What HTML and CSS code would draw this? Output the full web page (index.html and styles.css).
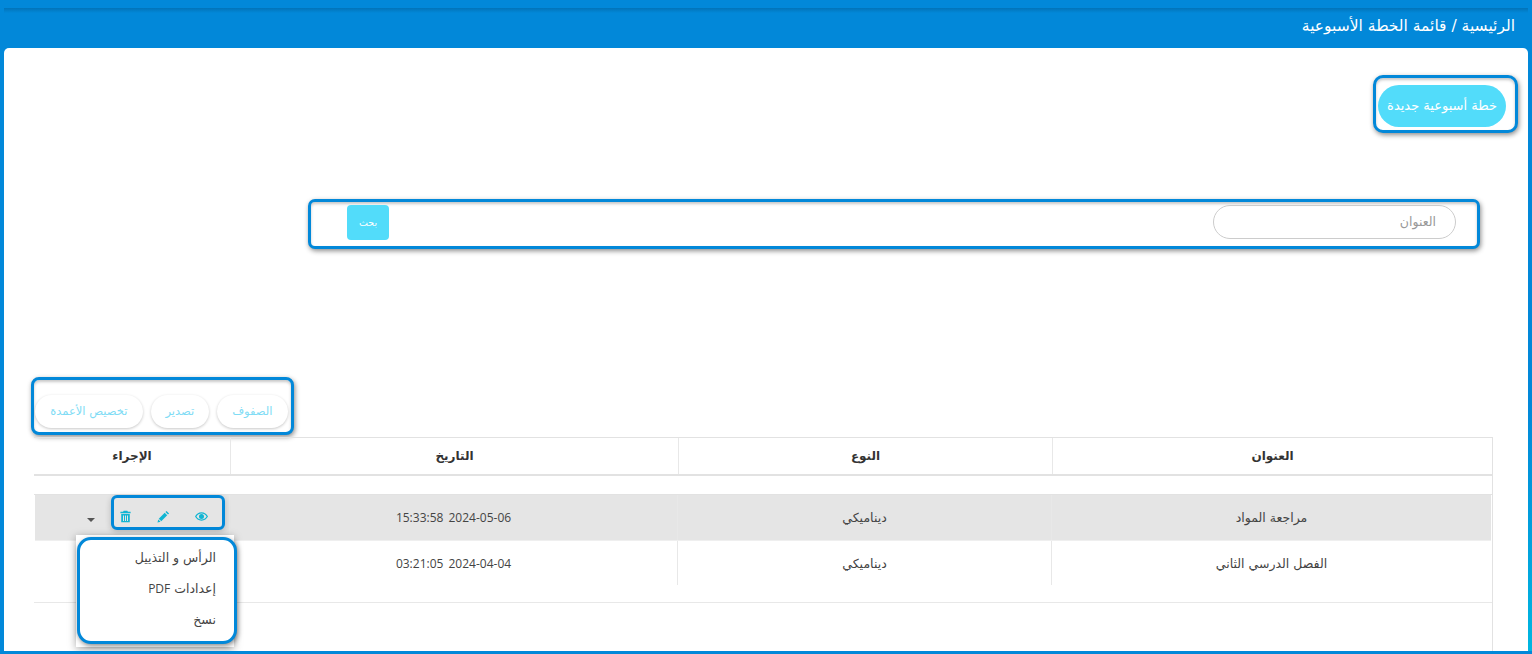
FILE: index.html
```html
<!DOCTYPE html>
<html lang="ar" dir="rtl">
<head>
<meta charset="utf-8">
<title>قائمة الخطة الأسبوعية</title>
<link rel="stylesheet" href="styles.css">
</head>
<body>
<div class="frame">
  <header class="crumb">الرئيسية / قائمة الخطة الأسبوعية</header>
  <main class="card">
    <div class="new-row">
      <div class="mark mark-outer mark-new"><button class="btn-new">خطة أسبوعية جديدة</button></div>
    </div>
    <div class="mark mark-outer mark-search">
      <div class="field">العنوان</div>
      <button class="btn-search">بحث</button>
    </div>
    <div class="mark mark-outer mark-tools">
      <button class="tool">الصفوف</button>
      <button class="tool tool-export">تصدير</button>
      <button class="tool">تخصيص الأعمدة</button>
    </div>
    <div class="table-wrap">
      <div class="row head">
        <div class="cell c1">العنوان</div>
        <div class="cell c2">النوع</div>
        <div class="cell c3">التاريخ</div>
        <div class="cell c4">الإجراء</div>
      </div>
      <div class="spacer"></div>
      <div class="row body sel">
        <div class="cell c1">مراجعة المواد</div>
        <div class="cell c2">ديناميكي</div>
        <div class="cell c3 date">2024-05-06 15:33:58</div>
        <div class="cell c4 actions">
          <div class="mark mark-icons">
            <svg class="ico" viewBox="0 0 14 14"><path fill="currentColor" fill-rule="evenodd" d="M7 2.500C3.800 2.500 1.300 4.600 0 7c1.300 2.400 3.800 4.500 7 4.500s5.700-2.100 7-4.500c-1.300-2.400-3.800-4.500-7-4.500zM7 3.800c2.300 0 4.300 1.300 5.500 3.200-1.200 1.900-3.200 3.200-5.500 3.200S2.700 8.900 1.500 7C2.700 5.100 4.700 3.800 7 3.800zM7 4.300a2.700 2.700 0 1 0 0 5.400 2.700 2.700 0 0 0 0-5.400z"/></svg>
            <svg class="ico" viewBox="0 0 14 14"><path fill="currentColor" d="M10.300 1 13 3.700 11.800 4.900 9.100 2.200zM8.300 3 11 5.700 4.600 12.100 1.900 9.400zM1.400 10.200 3.800 12.600 .5 13.500z"/></svg>
            <svg class="ico" viewBox="0 0 14 14"><path fill="currentColor" fill-rule="evenodd" d="M5 .8h4l.6 1.200H12.500v1.600h-11V2h2.900zM2.400 4.400h9.200V13.200H2.400zM4.300 5.800v6h1.100v-6zM6.450 5.800v6h1.100v-6zM8.600 5.800v6h1.100v-6z"/></svg>
          </div>
          <span class="caret"></span>
          <div class="menu">
            <div class="mark mark-menu">
              <div class="item">الرأس و التذييل</div>
              <div class="item">إعدادات <span class="latin">PDF</span></div>
              <div class="item">نسخ</div>
            </div>
          </div>
        </div>
      </div>
      <div class="row body plain">
        <div class="cell c1">الفصل الدرسي الثاني</div>
        <div class="cell c2">ديناميكي</div>
        <div class="cell c3 date">2024-04-04 03:21:05</div>
        <div class="cell c4"></div>
      </div>
      <div class="tail"></div>
      <div class="lower"></div>
    </div>
  </main>
</div>
</body>
</html>
```
FILE: styles.css
```css
* { box-sizing: border-box; }
html, body { margin: 0; height: 654px; overflow: hidden; }
body {
  font-family: "DejaVu Sans", sans-serif;
  font-size: 12px;
  color: #444;
}
button { font-family: inherit; border: 0; padding: 0; white-space: nowrap; }
.frame {
  height: 654px;
  padding: 8px 4px 3px;
  background: linear-gradient(#0288d9 62%, #00b6e0) right top / 4px 651px no-repeat, #0288d9;
  display: flex;
  flex-direction: column;
  overflow: hidden;
}
.crumb {
  height: 40px;
  flex: none;
  padding: 8px 13px 0 0;
  color: #fff;
  font-size: 15.5px;
  line-height: 20px;
  background: linear-gradient(#0273b8, #0288d9 5px);
}
.card {
  flex: 1;
  min-height: 0;
  background: #fff;
  border-radius: 5px 5px 0 0;
  overflow: hidden;
  position: relative;
}
.mark {
  border: 3px solid #0288d9;
  box-shadow: 1px 2px 5px rgba(0, 0, 0, .45);
  background: #fff;
}
.mark-outer {
  box-shadow: 1px 2px 5px rgba(0, 0, 0, .45), inset 0 2px 3px rgba(0, 0, 0, .22);
}
.new-row { padding: 27px 10px 0 0; height: 151px; display: flex; }
.mark-new {
  width: 145px;
  height: 58px;
  border-radius: 10px;
  padding: 7px 9px 0 2px;
  display: flex;
  justify-content: flex-start;
}
.btn-new {
  width: 128px;
  height: 42px;
  border-radius: 21px;
  background: #52dcfa;
  color: #fff;
  font-size: 13px;
  line-height: 40px;
}
.mark-search {
  width: 1172px;
  height: 50px;
  margin-right: 48px;
  border-radius: 7px;
  padding: 3px 21px 0 0;
  display: flex;
  justify-content: space-between;
  align-items: flex-start;
}
.field {
  width: 243px;
  height: 34px;
  border: 1px solid #ccc;
  border-radius: 17px;
  padding: 0 19px;
  line-height: 32px;
  color: #999;
  font-size: 12.500px;
}
.btn-search {
  width: 42px;
  height: 35px;
  margin-left: 36px;
  border-radius: 4px;
  background: #52dcfa;
  color: #fff;
  font-size: 9.5px;
}
.mark-tools {
  width: 263px;
  height: 58px;
  margin: 128px 1234px 0 0;
  border-radius: 8px;
  padding: 15px 3px 0 0;
  display: flex;
  gap: 8px;
}
.tool {
  height: 33px;
  padding: 0 15.5px;
  border-radius: 17px;
  background: #fff;
  color: #7fdcf5;
  font-size: 11.5px;
  line-height: 31px;
  box-shadow: 0 1px 3px rgba(0, 0, 0, .22);
}
.tool-export { padding: 0 14.5px; }
.table-wrap {
  width: 1459px;
  margin: 2px 35px 0 0;
  border-right: 1px solid #e2e2e2;
  border-top: 1px solid #e2e2e2;
}
.row { display: flex; }
.cell {
  flex: none;
  display: flex;
  align-items: center;
  justify-content: center;
  border-left: 1px solid #e8e8e8;
}
.c1 { width: 440px; }
.c2 { width: 374px; }
.c3 { width: 448px; }
.c4 { width: 196px; border-left: 0; position: relative; }
.body .c4 { width: 194px; }
.date { font-family: "Open Sans", sans-serif; font-size: 12px; word-spacing: 2px; }
.latin { font-family: "Open Sans", sans-serif; font-size: 12px; }
.head { height: 38px; border-bottom: 2px solid #e2e2e2; font-weight: 700; font-size: 12px; color: #333; }
.spacer { height: 19px; border-bottom: 1px solid #e2e2e2; }
.body { font-size: 12.5px; margin: 0 1px 0 1px; }
.sel { height: 46px; background: #e5e5e5; border-bottom: 1px solid #efefef; }
.plain { height: 44px; }
.tail { height: 18px; border-bottom: 1px solid #e8e8e8; }
.lower { height: 60px; }
.actions { justify-content: flex-start; }
.mark-icons {
  position: absolute;
  left: 76px;
  top: 0;
  width: 114px;
  height: 35px;
  border-radius: 6px;
  background: #e5e5e5;
  box-shadow: 0 2px 6px rgba(0, 0, 0, .2);
  display: flex;
  align-items: center;
  padding: 8px 14px 0 0;
  gap: 25px;
  color: #10b5d3;
}
.ico { width: 13px; height: 13px; flex: none; }
.caret {
  position: absolute;
  left: 52px;
  top: 23px;
  border: 4px solid transparent;
  border-top-color: #555;
  border-bottom: 0;
}
.menu {
  position: absolute;
  left: 41px;
  top: 40px;
  width: 158px;
  height: 112px;
  background: #fff;
  box-shadow: 0 2px 8px rgba(0, 0, 0, .35);
}
.mark-menu {
  position: absolute;
  left: 1px;
  top: 2px;
  width: 160px;
  height: 107px;
  border-radius: 14px;
  padding: 2px 18px 0 0;
}
.item { height: 31px; line-height: 31px; color: #444; font-size: 12.5px; }
```
